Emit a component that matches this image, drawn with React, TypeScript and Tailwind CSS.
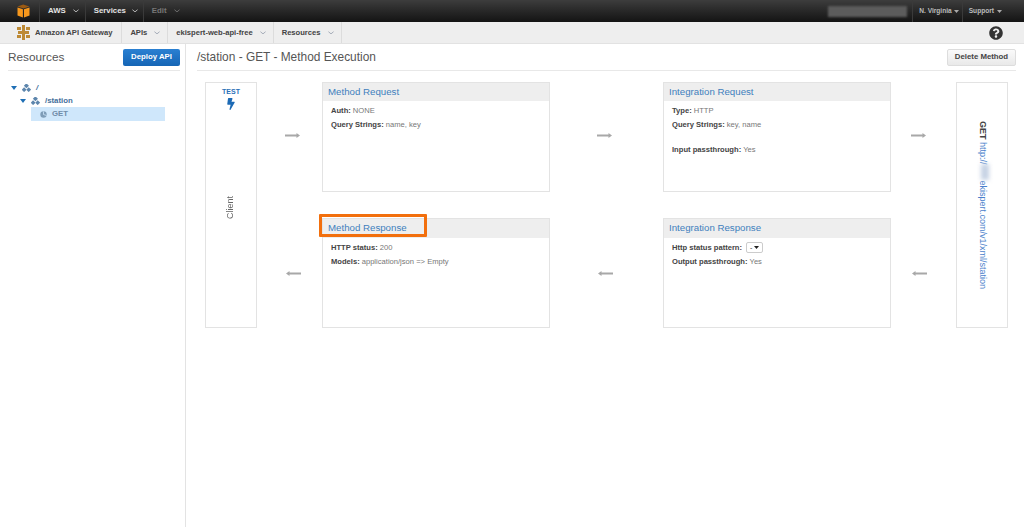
import type { ReactNode } from "react";
import { FaBolt, FaQuestionCircle } from "react-icons/fa";

const font = "font-['Liberation_Sans',Arial,sans-serif]";

function Caret({ className = "text-gray-400" }: { className?: string }) {
  return (
    <svg width="6" height="4" viewBox="0 0 7 4" className={className}>
      <path d="M0.5 0.5 L3.5 3 L6.5 0.5" fill="none" stroke="currentColor" strokeWidth="1" />
    </svg>
  );
}

function SolidCaret() {
  return (
    <svg width="6" height="4" viewBox="0 0 6 4" className="text-[#1f6fb5]">
      <path d="M0 0 H6 L3 4 Z" fill="currentColor" />
    </svg>
  );
}

function SolidCaretLight() {
  return (
    <svg width="5" height="3" viewBox="0 0 5 3">
      <path d="M0 0 H5 L2.5 3 Z" fill="#aaa" />
    </svg>
  );
}

function AwsCube() {
  return (
    <svg width="13" height="14" viewBox="0 0 13 14">
      <path d="M0.5 2.5 L6.2 0.5 L12.5 2.5 L6.5 4.6 Z" fill="#9c5a12" />
      <path d="M0.5 3.4 L5.9 5.3 V13.5 L0.5 11.5 Z" fill="#f7981d" />
      <path d="M12.5 3.4 L7 5.3 V13.5 L12.5 11.5 Z" fill="#f7981d" />
    </svg>
  );
}

function GatewayLogo() {
  return (
    <svg width="13" height="15" viewBox="0 0 13 15" fill="#bd8a35">
      <rect x="5" y="0" width="3" height="15" />
      <rect x="0" y="2" width="4" height="3" />
      <rect x="9" y="2" width="4" height="3" />
      <rect x="1" y="6" width="11" height="3" />
      <rect x="0" y="10" width="4" height="3" />
      <rect x="9" y="10" width="4" height="3" />
    </svg>
  );
}

function TreeIcon() {
  return (
    <svg width="9" height="8" viewBox="0 0 9 8" fill="#5d86ad">
      <rect x="2.6" y="0" width="3.6" height="3.6" transform="rotate(45 4.4 1.8)" />
      <rect x="0.4" y="4" width="3.4" height="3.4" transform="rotate(45 2.1 5.7)" />
      <rect x="5" y="4" width="3.4" height="3.4" transform="rotate(45 6.7 5.7)" />
    </svg>
  );
}

function MethodIcon() {
  return (
    <svg width="7" height="7" viewBox="0 0 7 7">
      <circle cx="3.5" cy="3.5" r="3.2" fill="#7f9db8" />
      <path d="M3.5 0.5 V3.5 L6.5 4.5" fill="none" stroke="#cfe7fb" strokeWidth="0.8" />
    </svg>
  );
}

function Arrow({ left = false }: { left?: boolean }) {
  return (
    <svg width="15" height="7" viewBox="0 0 15 7" className={left ? "rotate-180" : ""}>
      <path d="M0 2.5 H11.5 V1 L15 3.5 L11.5 6 V4.5 H0 Z" fill="#a8a8a8" />
    </svg>
  );
}

function TopItem({ label, dim = false, className }: { label: string; dim?: boolean; className: string }) {
  return (
    <div className={`flex items-center h-full pl-[8px] border-r border-[#3a3a3a] ${className}`}>
      <span className={`text-[7.8px] font-bold ${dim ? "text-[#777]" : "text-[#e4e4e4]"}`}>{label}</span>
      <Caret className={dim ? "text-[#777]" : "text-[#ccc]"} />
    </div>
  );
}

function SubItem({ label }: { label: string }) {
  return (
    <div className="flex items-center gap-[7px] h-full pl-[8px] pr-[7px] border-r border-[#dcdcdc]">
      <span className="text-[7.6px] font-bold text-[#444]">{label}</span>
      <Caret />
    </div>
  );
}

function Box({ title, tall = false, children }: { title: string; tall?: boolean; children?: ReactNode }) {
  return (
    <div className="flex flex-col border border-[#e3e3e3] bg-white">
      <div className={`${tall ? "h-[19px]" : "h-[18px]"} shrink-0 flex items-center pl-[5px] bg-[#eeeeee] text-[9.7px] text-[#3f7fbd]`}>
        {title}
      </div>
      <div className="flex flex-col gap-[6px] pl-[8px] pt-[5px] text-[7.6px] leading-[9px] text-[#777]">{children}</div>
    </div>
  );
}

function Row({ label, children }: { label: string; children?: ReactNode }) {
  return (
    <div className="flex items-center gap-[2px] h-[8px]">
      <b className="text-[#444]">{label}</b> {children}
    </div>
  );
}

export default function App() {
  return (
    <div className={`${font} w-[1024px] h-[527px] overflow-hidden bg-white flex flex-col`}>
      {/* top bar */}
      <div className="h-[22px] shrink-0 flex items-center bg-gradient-to-b from-[#3d3d3d] to-[#141414]">
        <div className="w-[40px] h-full flex items-center justify-end pr-[9px] border-r border-[#3a3a3a]">
          <AwsCube />
        </div>
        <TopItem label="AWS" className="gap-[7px] pr-[6px]" />
        <TopItem label="Services" className="gap-[6px] pr-[5px]" />
        <TopItem label="Edit" dim className="gap-[7px] pr-[8px] border-r-0" />
        <div className="flex-1" />
        <div className="w-[79px] h-[11px] mr-[5px] bg-[#5c5c5c] blur-[1px]" />
        <div className="flex items-center gap-[2px] h-full pl-[6px] pr-[3px] border-l border-[#3a3a3a]">
          <span className="text-[6.6px] font-bold text-[#bbb]">N. Virginia</span>
          <SolidCaretLight />
        </div>
        <div className="flex items-center gap-[3px] h-full pl-[6px] pr-[22px] border-l border-[#3a3a3a]">
          <span className="text-[6.6px] font-bold text-[#bbb]">Support</span>
          <SolidCaretLight />
        </div>
      </div>

      {/* service bar */}
      <div className="h-[22px] shrink-0 flex items-center bg-[#eeeeee] border-b border-[#e2e2e2]">
        <div className="flex items-center gap-[5px] h-full pl-[17px] pr-[9px] border-r border-[#dcdcdc]">
          <GatewayLogo />
          <span className="text-[7.6px] font-bold text-[#444]">Amazon API Gateway</span>
        </div>
        <SubItem label="APIs" />
        <SubItem label="ekispert-web-api-free" />
        <SubItem label="Resources" />
        <div className="flex-1" />
        <FaQuestionCircle className="mr-[21px] text-[14px] text-[#333]" />
      </div>

      <div className="flex flex-1 min-h-0">
        {/* sidebar */}
        <div className="w-[186px] shrink-0 border-r border-[#e3e3e3] pl-[8px] pr-[5px]">
          <div className="h-[27px] flex items-center justify-between border-b border-[#e8e8e8]">
            <span className="pt-[1px] text-[11.8px] text-[#555]">Resources</span>
            <div className="w-[57px] h-[17px] flex items-center justify-center rounded-[2px] bg-gradient-to-b from-[#2a80d2] to-[#1565b5] text-[7.8px] font-bold text-white">
              Deploy API
            </div>
          </div>
          <div className="mt-[10px] flex flex-col text-[7.8px] text-[#44709c] font-bold">
            <div className="h-[13px] flex items-center gap-[5px] pl-[3px]">
              <SolidCaret />
              <TreeIcon />
              <span className="italic">/</span>
            </div>
            <div className="h-[13px] flex items-center gap-[5px] pl-[12px]">
              <SolidCaret />
              <TreeIcon />
              <span>/station</span>
            </div>
            <div className="h-[14px] w-[134px] ml-[23px] flex items-center gap-[5px] pl-[9px] bg-[#cfe7fb] text-[#6f8ca8]">
              <MethodIcon />
              GET
            </div>
          </div>
        </div>

        {/* main */}
        <div className="flex-1 pl-[11px] pr-[8px]">
          <div className="h-[27px] flex items-center justify-between border-b border-[#e8e8e8]">
            <span className="pt-[1px] text-[11.9px] text-[#555]">/station - GET - Method Execution</span>
            <div className="w-[69px] h-[17px] flex items-center justify-center rounded-[2px] border border-[#ddd] bg-gradient-to-b from-[#fafafa] to-[#e9e9e9] text-[7.8px] font-bold text-[#444]">
              Delete Method
            </div>
          </div>

          <div className="mt-[11px] ml-[8px] grid grid-cols-[52px_65px_228px_113px_228px_65px_52px] grid-rows-[110px_110px] gap-y-[26px]">
            <div className="row-span-2 flex flex-col items-center border border-[#e3e3e3] pt-[4px]">
              <span className="text-[7px] font-bold text-[#2b71b8]">TEST</span>
              <FaBolt className="text-[12px] text-[#1c6ab5]" />
              <div className="flex-1 flex items-center justify-center pb-[22px]">
                <span className="text-[9px] text-[#666] [writing-mode:vertical-rl] rotate-180">Client</span>
              </div>
            </div>
            <div className="flex items-center pl-[28px] pb-[3px]"><Arrow /></div>
            <Box title="Method Request">
              <Row label="Auth:">NONE</Row>
              <Row label="Query Strings:">name, key</Row>
            </Box>
            <div className="flex items-center pl-[47px] pb-[3px]"><Arrow /></div>
            <Box title="Integration Request">
              <Row label="Type:">HTTP</Row>
              <Row label="Query Strings:">key, name</Row>
              <div className="h-[5px]" />
              <Row label="Input passthrough:">Yes</Row>
            </Box>
            <div className="flex items-center pl-[20px] pb-[3px]"><Arrow /></div>
            <div className="row-span-2 flex items-center justify-center border border-[#e3e3e3]">
              <span className="[writing-mode:vertical-rl] text-[9px] text-[#4a7fcb]">
                <b className="text-[#444]">GET</b> http://
                <span className="inline-block w-[8px] h-[16px] align-middle bg-[#c6d2e4] blur-[2px]" />
                ekispert.com/v1/xml/station
              </span>
            </div>

            <div className="col-start-2 flex items-center pl-[29px]"><Arrow left /></div>
            <div className="relative grid">
              <Box title="Method Response" tall>
                <Row label="HTTP status:">200</Row>
                <Row label="Models:">application/json =&gt; Empty</Row>
              </Box>
              <div className="absolute left-[-3px] top-[-4px] w-[108px] h-[23px] border-[3px] border-[#f26f0d] rounded-[1px]" />
            </div>
            <div className="flex items-center pl-[48px]"><Arrow left /></div>
            <Box title="Integration Response" tall>
              <Row label="Http status pattern:">
                <span className="ml-[2px] w-[17px] h-[11px] flex items-center justify-between px-[3px] border border-[#ccc] rounded-[2px] text-[7px] text-[#333]">
                  -<svg width="5" height="3" viewBox="0 0 5 3"><path d="M0 0 H5 L2.5 3 Z" fill="#222" /></svg>
                </span>
              </Row>
              <Row label="Output passthrough:">Yes</Row>
            </Box>
            <div className="flex items-center pl-[21px]"><Arrow left /></div>
          </div>
        </div>
      </div>
    </div>
  );
}
